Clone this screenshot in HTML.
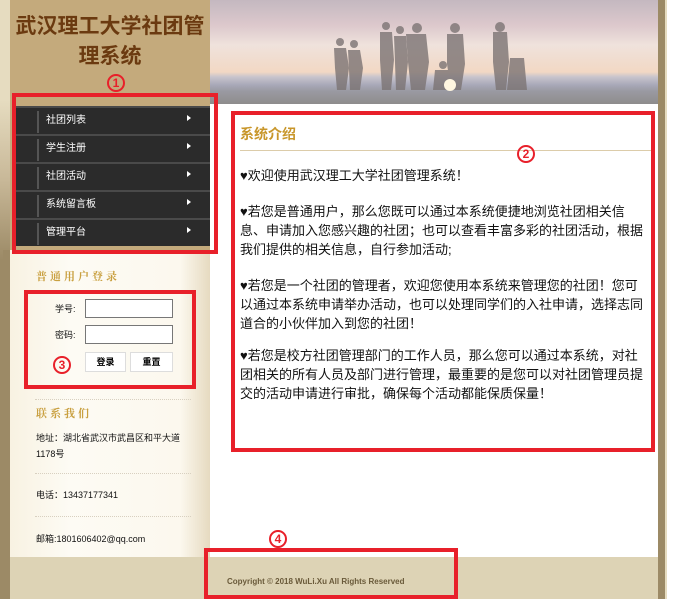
<!DOCTYPE html>
<html><head><meta charset="utf-8"><style>
*{margin:0;padding:0;box-sizing:border-box}
body{width:679px;height:599px;background:#fff;position:relative;overflow:hidden;font-family:"Liberation Sans","Noto Sans CJK SC",sans-serif}
.a{position:absolute}
.red{position:absolute;border:4px solid #e8202a}
.num{position:absolute;width:18px;height:18px;border:2px solid #e8202a;border-radius:50%;color:#e8202a;font:bold 12px/14px "Liberation Sans",sans-serif;text-align:center}
.menu div{position:absolute;left:12px;width:198px;height:28px;background:#2b2b2b;border-top:2px solid #4a4a4a;color:#fff;font-size:10px;line-height:26px;padding-left:34px}
.menu div:before{content:"";position:absolute;left:25px;top:3px;width:2px;height:22px;background:#555}
.menu div:after{content:"";position:absolute;left:175px;top:7px;border-left:4px solid #fff;border-top:3px solid transparent;border-bottom:3px solid transparent}
.side{font-size:9px;color:#111}
.dot{position:absolute;left:35px;width:156px;border-top:1px dotted #d8d0c0}
.gold{font-family:"Noto Serif CJK SC",serif;font-weight:bold;color:#c9a040;font-size:11px;letter-spacing:3px}
.p{position:absolute;left:240px;width:405px;font-size:13px;line-height:19px;color:#111}
input{position:absolute;border:1px solid #777;background:#fff}
.btn{position:absolute;background:#fff;border:1px solid #ddd;font-size:9px;font-weight:bold;text-align:center;line-height:18px;height:20px}
</style></head><body>
<div class="a" style="left:0;top:0;width:10px;height:599px;background:linear-gradient(#e6dcc0 0,#e6dcc0 100px,#c8b898 180px,#9c8a66 260px)"></div>
<div class="a" style="left:3px;top:250px;width:7px;height:349px;background:#9c8a66"></div>
<div class="a" style="left:10px;top:0;width:200px;height:250px;background:#c4aa7c"></div>
<div class="a" style="left:10px;top:12px;width:200px;text-align:center;font-size:21px;font-weight:bold;color:#6b3a10;line-height:30px">武汉理工大学社团管<br>理系统</div>
<div class="a" style="left:210px;top:0;width:448px;height:104px;background:linear-gradient(#c4b8c0 0,#dcc8cc 25px,#efe2dc 45px,#f2d8c4 72px,#c8c4cc 77px,#a8a8b8 85px,#9a9aa2 91px,#8e8c8c 104px)"></div>
<svg class="a" style="left:210px;top:0" width="448" height="104"><g fill="#7c7474" opacity=".8">
<circle cx="130" cy="42" r="4"/><path d="M124 48h12l3 20-3 22h-9l-2-22z"/>
<circle cx="144" cy="44" r="4"/><path d="M138 50h12l3 18-3 22h-10z"/>
<circle cx="176" cy="26" r="4"/><path d="M170 32h12l2 28-3 30h-9l-2-30z"/>
<circle cx="190" cy="30" r="4"/><path d="M184 36h12l2 26-3 28h-9z"/>
<circle cx="207" cy="28" r="5"/><path d="M196 34h20l3 28-4 28h-14l-3-28z"/>
<circle cx="245" cy="28" r="5"/><path d="M237 34h16l2 30-4 26h-10l-4-26z"/>
<circle cx="233" cy="65" r="4"/><path d="M225 70h14l4 20h-20z"/>
<circle cx="290" cy="27" r="5"/><path d="M283 32h14l2 30-3 28h-10l-3-28z"/>
<path d="M300 58h14l3 32h-20z"/></g><ellipse cx="240" cy="85" rx="6" ry="6" fill="#fff6e0"/></svg>
<div class="a" style="left:658px;top:0;width:7px;height:599px;background:#9c8a66"></div>
<div class="a" style="left:665px;top:0;width:2px;height:599px;background:#e6dcc0"></div>
<div class="menu"><div style="top:106px">社团列表</div><div style="top:134px">学生注册</div><div style="top:162px">社团活动</div><div style="top:190px">系统留言板</div><div style="top:218px">管理平台</div></div>
<div class="a" style="left:10px;top:250px;width:200px;height:307px;background:linear-gradient(90deg,#f8f2e2,#fdfbf4 30%,#fcf8ee 85%,#e6dac0)"></div>
<div class="a gold" style="left:36px;top:268px">普通用户登录</div>
<div class="a side" style="left:55px;top:302px">学号:</div><input style="left:85px;top:299px;width:88px;height:19px">
<div class="a side" style="left:55px;top:328px">密码:</div><input style="left:85px;top:325px;width:88px;height:19px">
<div class="btn" style="left:85px;top:352px;width:41px">登录</div><div class="btn" style="left:130px;top:352px;width:43px">重置</div>
<div class="dot" style="top:399px"></div>
<div class="a gold" style="left:36px;top:405px">联系我们</div>
<div class="a side" style="left:36px;top:430px;line-height:16px;width:160px">地址：湖北省武汉市武昌区和平大道1178号</div>
<div class="dot" style="top:473px"></div>
<div class="a side" style="left:36px;top:488px">电话：13437177341</div>
<div class="dot" style="top:516px"></div>
<div class="a side" style="left:36px;top:532px">邮箱:1801606402@qq.com</div>
<div class="a" style="left:10px;top:557px;width:648px;height:42px;background:#ddd3b5"></div>
<div class="a" style="left:227px;top:577px;font-size:8px;font-weight:bold;color:#6a5a3a">Copyright © 2018 WuLi.Xu All Rights Reserved</div>
<div class="a" style="left:240px;top:124px;font-size:14px;font-weight:bold;color:#c8962a">系统介绍</div>
<div class="a" style="left:240px;top:150px;width:412px;border-top:1px solid #dcccaa"></div>
<div class="p" style="top:166px">♥欢迎使用武汉理工大学社团管理系统！</div>
<div class="p" style="top:202px">♥若您是普通用户，那么您既可以通过本系统便捷地浏览社团相关信息、申请加入您感兴趣的社团；也可以查看丰富多彩的社团活动，根据我们提供的相关信息，自行参加活动;</div>
<div class="p" style="top:276px">♥若您是一个社团的管理者，欢迎您使用本系统来管理您的社团！您可以通过本系统申请举办活动，也可以处理同学们的入社申请，选择志同道合的小伙伴加入到您的社团！</div>
<div class="p" style="top:346px">♥若您是校方社团管理部门的工作人员，那么您可以通过本系统，对社团相关的所有人员及部门进行管理，最重要的是您可以对社团管理员提交的活动申请进行审批，确保每个活动都能保质保量！</div>
<div class="red" style="left:12px;top:93px;width:206px;height:161px"></div>
<div class="num" style="left:107px;top:74px">1</div>
<div class="red" style="left:231px;top:111px;width:424px;height:341px"></div>
<div class="num" style="left:517px;top:145px">2</div>
<div class="red" style="left:24px;top:290px;width:172px;height:99px"></div>
<div class="num" style="left:53px;top:356px">3</div>
<div class="red" style="left:204px;top:548px;width:254px;height:51px"></div>
<div class="num" style="left:269px;top:530px">4</div>
</body></html>
